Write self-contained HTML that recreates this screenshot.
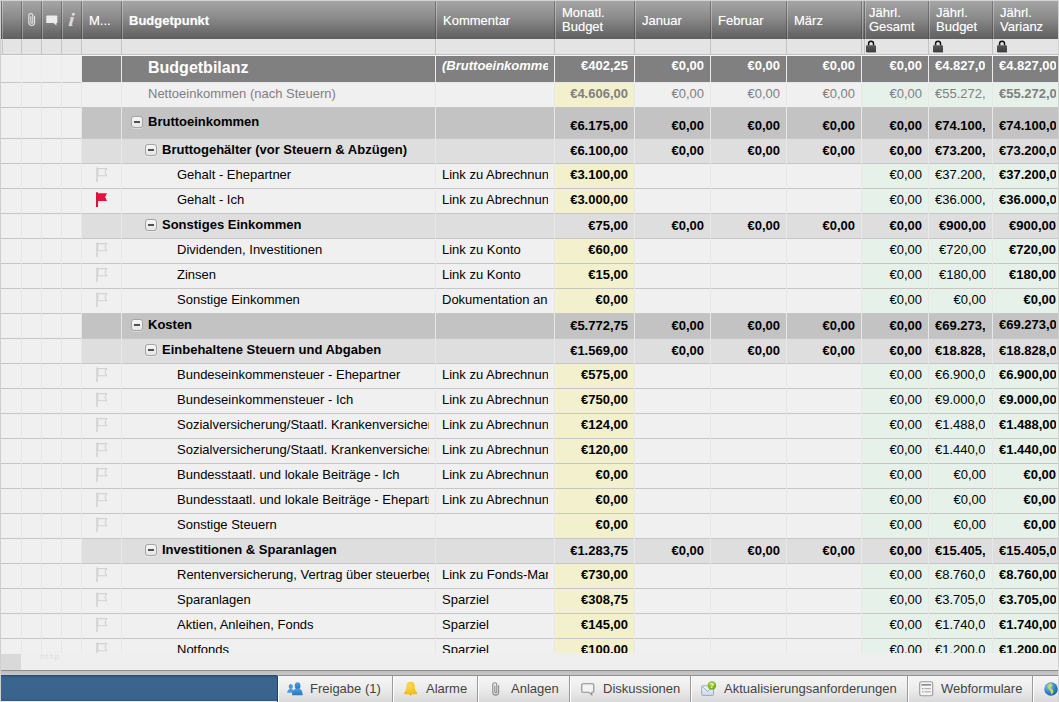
<!DOCTYPE html>
<html lang="de"><head><meta charset="utf-8"><title>Budget</title>
<style>
*{box-sizing:border-box;margin:0;padding:0}
html,body{width:1059px;height:702px;overflow:hidden;background:#efefef}
body{font-family:"Liberation Sans",Arial,Helvetica,sans-serif;font-size:13px;color:#000;position:relative}
#grid{position:absolute;left:0;top:0;width:1059px;height:653px;overflow:hidden;background:#f0f0f0}
#edgeL{position:absolute;left:0;top:0;width:1px;height:702px;background:#cfcfcf;z-index:20}
#edgeR{position:absolute;left:1058px;top:0;width:1px;height:702px;background:#d2d2d2;z-index:20}
#edgeT{position:absolute;left:0;top:0;width:1059px;height:1px;background:#d3d3d3;z-index:20}
#hdr{position:absolute;left:1px;top:1px;width:1057px;height:38px;background:linear-gradient(#a5a5a5,#8a8a8a 45%,#6a6a6a 85%,#5f5f5f);color:#fff}
.hc{position:absolute;top:0;height:38px;border-left:1px solid rgba(50,50,50,.38);box-shadow:inset 1px 0 0 rgba(255,255,255,.30);white-space:nowrap;overflow:hidden;text-shadow:0 0 1px rgba(255,255,255,.4)}
.hc .t1{position:absolute;left:7px;top:12px;line-height:15px}
.hc .t2{position:absolute;left:7px;top:5px;line-height:14px}
#flt{position:absolute;left:1px;top:39px;width:1057px;height:16px;background:#e4e4e4;border-bottom:1px solid #c2c2c2}
.fc{position:absolute;top:0;height:15px;width:1px;background:#c4c4c4}
#fltlt{position:absolute;left:1px;top:55px;width:1057px;height:1px;background:#f6f6f6}
.lock{position:absolute;top:1px}
.row{position:absolute;left:0;width:1059px;border-bottom:1px solid #c6c6c6;background:#f0f0f0}
.c{position:absolute;top:0;bottom:0}
.c>u{position:absolute;left:5px;right:6px;top:0;bottom:0;overflow:hidden;white-space:nowrap;text-decoration:none}
.c>u>i{display:inline-block;min-width:100%;text-align:right;font-style:normal;line-height:21px;position:relative}
.vs{position:absolute;top:0;bottom:-1px;width:1px;background:#e7e7e7;z-index:3}
.vd{background:#e6e6e6}
.vm{background:#e7e7e7}
.title .vs{background:#ececec}
.lab{position:absolute;top:0;bottom:0;overflow:hidden;white-space:nowrap;line-height:21px}
.cm{position:absolute;top:0;bottom:0;overflow:hidden;white-space:nowrap;line-height:21px}
.b{font-weight:bold}
.title{color:#fff}
.title .bg,.g1 .bg,.g2 .bg{position:absolute;left:82px;right:0;top:0;bottom:0}
.title .bg{background:#808080}
.g1 .bg{background:#c3c3c3}
.g2 .bg{background:#dedede}
.netto{color:#7f7f7f}
.y{background:#f2f0cd}
.gr{background:#e6f1e9}
.fl{position:absolute;left:96px;top:3px}
.mn{position:absolute;width:12px;height:12px;border:1px solid #a4a4a4;border-radius:3px;background:linear-gradient(#f6f6f6,#e6e6e6);box-shadow:0 1px 0 rgba(255,255,255,.35)}
.mn:after{content:"";position:absolute;left:2px;top:4px;width:6px;height:2px;background:#505050}
#below{position:absolute;left:0;top:653px;width:1059px;height:17px;background:#efefef}
#corner{position:absolute;left:1px;top:654px;width:20px;height:16px;background:#d9d9d9}
#wm{position:absolute;left:40px;top:652px;font-size:8px;color:#dcdcdc;font-family:"Liberation Mono",monospace;letter-spacing:0}
#ln1{position:absolute;left:0;top:670px;width:1059px;height:1px;background:#8e8e8e}
#band{position:absolute;left:0;top:671px;width:1059px;height:4px;background:linear-gradient(#bdbdbd,#c8c8c8)}
#ln2{position:absolute;left:0;top:675px;width:1059px;height:1px;background:#8f8f8f}
#bar{position:absolute;left:1px;top:675px;width:276px;height:26px;background:linear-gradient(#28496d,#38628c 10%,#3a658f 20%,#3a648e 90%,#31597f)}
#barb{position:absolute;left:0;top:701px;width:1059px;height:1px;background:#e8e8e8}
.tab{position:absolute;top:676px;height:26px;background:linear-gradient(#f6f6f6,#ececec 50%,#d9d9d9);border-left:1px solid #9a9a9a;box-shadow:inset 1px 0 0 #fff;color:#444;font-size:13px;line-height:24px;white-space:nowrap;overflow:hidden}
.tab span{position:absolute;top:1px}
.tab svg{position:absolute}
</style></head><body>

<div id="grid">
<div id="hdr">
<div class="hc" style="left:0px;width:20px"></div>
<div class="hc" style="left:20px;width:20px"><svg style="position:absolute;left:5px;top:11px" width="10" height="15" viewBox="0 0 10 15"><path d="M7.6 4.2V10.6A2.9 2.9 0 0 1 1.8 10.6V3.6A2 2 0 0 1 5.8 3.6V10.2A1 1 0 0 1 3.8 10.2V4.6" fill="none" stroke="#e2e2e2" stroke-width="1.15" stroke-linecap="round"/></svg></div>
<div class="hc" style="left:40px;width:20px"><svg style="position:absolute;left:4px;top:13px" width="13" height="13" viewBox="0 0 13 13"><path d="M1 1.4H10.6A0.7 0.7 0 0 1 11.3 2.1V8.4A0.7 0.7 0 0 1 10.6 9.1H10.4V11.4L7.6 9.1H1A0.7 0.7 0 0 1 0.3 8.4V2.1A0.7 0.7 0 0 1 1 1.4Z" fill="#ececec"/></svg></div>
<div class="hc" style="left:60px;width:20px"><span style="position:absolute;left:7px;top:7px;font-family:'Liberation Serif',serif;font-style:italic;font-weight:bold;font-size:19px;line-height:24px;color:#dcdcdc;transform:skewX(-6deg)">i</span></div>
<div class="hc" style="left:80px;width:40px"><div class="t1">M...</div></div>
<div class="hc" style="left:120px;width:314px"><div class="t1 b">Budgetpunkt</div></div>
<div class="hc" style="left:434px;width:119px"><div class="t1">Kommentar</div></div>
<div class="hc" style="left:553px;width:80px"><div class="t2">Monatl.<br>Budget</div></div>
<div class="hc" style="left:633px;width:76px"><div class="t1">Januar</div></div>
<div class="hc" style="left:709px;width:76px"><div class="t1">Februar</div></div>
<div class="hc" style="left:785px;width:75px"><div class="t1">März</div></div>
<div class="hc" style="left:860px;width:3px"></div>
<div class="hc" style="left:863px;width:64px"><div class="t2" style="left:4px">Jährl.<br>Gesamt</div></div>
<div class="hc" style="left:927px;width:64px"><div class="t2">Jährl.<br>Budget</div></div>
<div class="hc" style="left:991px;width:66px"><div class="t2">Jährl.<br>Varianz</div></div>
</div>
<div id="flt">
<div class="fc" style="left:1px"></div>
<div class="fc" style="left:20px"></div>
<div class="fc" style="left:40px"></div>
<div class="fc" style="left:60px"></div>
<div class="fc" style="left:80px"></div>
<div class="fc" style="left:120px"></div>
<div class="fc" style="left:434px"></div>
<div class="fc" style="left:553px"></div>
<div class="fc" style="left:633px"></div>
<div class="fc" style="left:709px"></div>
<div class="fc" style="left:785px"></div>
<div class="fc" style="left:860px"></div>
<div class="fc" style="left:863px"></div>
<div class="fc" style="left:927px"></div>
<div class="fc" style="left:991px"></div>
<svg class="lock" style="left:865px" width="11" height="13" viewBox="0 0 11 13"><defs><linearGradient id="lg0" x1="0" y1="0" x2="0" y2="1"><stop offset="0" stop-color="#5a5a5a"/><stop offset="1" stop-color="#3c3c3c"/></linearGradient></defs><path d="M2.6 5.6V3.6A2.45 2.45 0 0 1 7.5 3.6V5.6" fill="none" stroke="#111" stroke-width="1.5"/><rect x="0" y="5.2" width="10" height="7" rx="0.8" fill="url(#lg0)"/><rect x="0.5" y="12" width="10" height="0.8" fill="rgba(0,0,0,.18)"/></svg>
<svg class="lock" style="left:932px" width="11" height="13" viewBox="0 0 11 13"><defs><linearGradient id="lg1" x1="0" y1="0" x2="0" y2="1"><stop offset="0" stop-color="#5a5a5a"/><stop offset="1" stop-color="#3c3c3c"/></linearGradient></defs><path d="M2.6 5.6V3.6A2.45 2.45 0 0 1 7.5 3.6V5.6" fill="none" stroke="#111" stroke-width="1.5"/><rect x="0" y="5.2" width="10" height="7" rx="0.8" fill="url(#lg1)"/><rect x="0.5" y="12" width="10" height="0.8" fill="rgba(0,0,0,.18)"/></svg>
<svg class="lock" style="left:996px" width="11" height="13" viewBox="0 0 11 13"><defs><linearGradient id="lg2" x1="0" y1="0" x2="0" y2="1"><stop offset="0" stop-color="#5a5a5a"/><stop offset="1" stop-color="#3c3c3c"/></linearGradient></defs><path d="M2.6 5.6V3.6A2.45 2.45 0 0 1 7.5 3.6V5.6" fill="none" stroke="#111" stroke-width="1.5"/><rect x="0" y="5.2" width="10" height="7" rx="0.8" fill="url(#lg2)"/><rect x="0.5" y="12" width="10" height="0.8" fill="rgba(0,0,0,.18)"/></svg>
</div><div id="fltlt"></div>
<div class="row title" style="top:56px;height:27px">
<div class="bg"></div>
<div class="lab b" style="left:148px;width:281px;font-size:16px;line-height:24px;top:0px">Budgetbilanz</div>
<div class="cm b" style="left:442px;width:106px;top:-1px;font-style:italic;">(Bruttoeinkommen - Kosten)</div>
<div class="c " style="left:555px;width:79px"><u><i class="b" style="top:-1px">€402,25</i></u></div>
<div class="c " style="left:635px;width:75px"><u><i class="b" style="top:-1px">€0,00</i></u></div>
<div class="c " style="left:711px;width:75px"><u><i class="b" style="top:-1px">€0,00</i></u></div>
<div class="c " style="left:787px;width:74px"><u><i class="b" style="top:-1px">€0,00</i></u></div>
<div class="c " style="left:862px;width:66px"><u><i class="b" style="top:-1px">€0,00</i></u></div>
<div class="c " style="left:929px;width:63px"><u style="left:6px;right:7px"><i class="b" style="top:-1px">€4.827,00</i></u></div>
<div class="c " style="left:993px;width:69px"><u style="left:6px"><i class="b" style="top:-1px">€4.827,00</i></u></div>
<div class="vs vd" style="left:21px"></div>
<div class="vs vd" style="left:41px"></div>
<div class="vs vd" style="left:61px"></div>
<div class="vs" style="left:81px"></div>
<div class="vs" style="left:121px"></div>
<div class="vs" style="left:435px"></div>
<div class="vs" style="left:554px"></div>
<div class="vs" style="left:634px"></div>
<div class="vs" style="left:710px"></div>
<div class="vs" style="left:786px"></div>
<div class="vs" style="left:861px"></div>
<div class="vs" style="left:928px"></div>
<div class="vs" style="left:992px"></div>
<div style="position:absolute;left:82px;right:0;bottom:-1px;height:1px;background:#e9e9e9"></div>
</div>
<div class="row netto" style="top:83px;height:25px">
<div class="lab" style="left:148px;width:281px;top:0px">Nettoeinkommen (nach Steuern)</div>
<div class="c y" style="left:555px;width:79px"><u><i class="b" style="top:0px">€4.606,00</i></u></div>
<div class="c " style="left:635px;width:75px"><u><i class="" style="top:0px">€0,00</i></u></div>
<div class="c " style="left:711px;width:75px"><u><i class="" style="top:0px">€0,00</i></u></div>
<div class="c " style="left:787px;width:74px"><u><i class="" style="top:0px">€0,00</i></u></div>
<div class="c gr" style="left:862px;width:66px"><u><i class="" style="top:0px">€0,00</i></u></div>
<div class="c gr" style="left:929px;width:63px"><u style="left:6px;right:7px"><i class="" style="top:0px">€55.272,00</i></u></div>
<div class="c gr" style="left:993px;width:69px"><u style="left:6px"><i class="b" style="top:0px">€55.272,00</i></u></div>
<div class="vs vd" style="left:21px"></div>
<div class="vs vd" style="left:41px"></div>
<div class="vs vd" style="left:61px"></div>
<div class="vs vm" style="left:81px"></div>
<div class="vs vm" style="left:121px"></div>
<div class="vs" style="left:435px"></div>
<div class="vs" style="left:554px"></div>
<div class="vs" style="left:634px"></div>
<div class="vs" style="left:710px"></div>
<div class="vs" style="left:786px"></div>
<div class="vs" style="left:861px"></div>
<div class="vs" style="left:928px"></div>
<div class="vs" style="left:992px"></div>
</div>
<div class="row g1" style="top:108px;height:31px">
<div class="bg"></div>
<span class="mn" style="left:131px;top:8px"></span>
<div class="lab b" style="left:148px;width:281px;top:3px">Bruttoeinkommen</div>
<div class="c " style="left:555px;width:79px"><u><i class="b" style="top:7px">€6.175,00</i></u></div>
<div class="c " style="left:635px;width:75px"><u><i class="b" style="top:7px">€0,00</i></u></div>
<div class="c " style="left:711px;width:75px"><u><i class="b" style="top:7px">€0,00</i></u></div>
<div class="c " style="left:787px;width:74px"><u><i class="b" style="top:7px">€0,00</i></u></div>
<div class="c " style="left:862px;width:66px"><u><i class="b" style="top:7px">€0,00</i></u></div>
<div class="c " style="left:929px;width:63px"><u style="left:6px;right:7px"><i class="b" style="top:7px">€74.100,00</i></u></div>
<div class="c " style="left:993px;width:69px"><u style="left:6px"><i class="b" style="top:7px">€74.100,00</i></u></div>
<div class="vs vd" style="left:21px"></div>
<div class="vs vd" style="left:41px"></div>
<div class="vs vd" style="left:61px"></div>
<div class="vs" style="left:81px"></div>
<div class="vs" style="left:121px"></div>
<div class="vs" style="left:435px"></div>
<div class="vs" style="left:554px"></div>
<div class="vs" style="left:634px"></div>
<div class="vs" style="left:710px"></div>
<div class="vs" style="left:786px"></div>
<div class="vs" style="left:861px"></div>
<div class="vs" style="left:928px"></div>
<div class="vs" style="left:992px"></div>
<div style="position:absolute;left:82px;right:0;bottom:-1px;height:1px;background:#c9c9c9"></div>
</div>
<div class="row g2" style="top:139px;height:25px">
<div class="bg"></div>
<span class="mn" style="left:145px;top:5px"></span>
<div class="lab b" style="left:162px;width:267px;top:0px">Bruttogehälter (vor Steuern &amp; Abzügen)</div>
<div class="c " style="left:555px;width:79px"><u><i class="b" style="top:1px">€6.100,00</i></u></div>
<div class="c " style="left:635px;width:75px"><u><i class="b" style="top:1px">€0,00</i></u></div>
<div class="c " style="left:711px;width:75px"><u><i class="b" style="top:1px">€0,00</i></u></div>
<div class="c " style="left:787px;width:74px"><u><i class="b" style="top:1px">€0,00</i></u></div>
<div class="c " style="left:862px;width:66px"><u><i class="b" style="top:1px">€0,00</i></u></div>
<div class="c " style="left:929px;width:63px"><u style="left:6px;right:7px"><i class="b" style="top:1px">€73.200,00</i></u></div>
<div class="c " style="left:993px;width:69px"><u style="left:6px"><i class="b" style="top:1px">€73.200,00</i></u></div>
<div class="vs vd" style="left:21px"></div>
<div class="vs vd" style="left:41px"></div>
<div class="vs vd" style="left:61px"></div>
<div class="vs" style="left:81px"></div>
<div class="vs" style="left:121px"></div>
<div class="vs" style="left:435px"></div>
<div class="vs" style="left:554px"></div>
<div class="vs" style="left:634px"></div>
<div class="vs" style="left:710px"></div>
<div class="vs" style="left:786px"></div>
<div class="vs" style="left:861px"></div>
<div class="vs" style="left:928px"></div>
<div class="vs" style="left:992px"></div>
</div>
<div class="row leaf" style="top:164px;height:25px">
<svg class="fl" width="12" height="16" viewBox="0 0 12 16"><path d="M1 0.5V15" stroke="#d2d2d2" stroke-width="1.6" fill="none"/><path d="M1.8 1.6H10.6L9 5.2L10.6 8.8H1.8Z" stroke="#d2d2d2" stroke-width="1.1" fill="none"/></svg>
<div class="lab" style="left:177px;width:252px;top:0px">Gehalt - Ehepartner</div>
<div class="cm" style="left:442px;width:106px;top:0px;">Link zu Abrechnung</div>
<div class="c y" style="left:555px;width:79px"><u><i class="b" style="top:0px">€3.100,00</i></u></div>
<div class="c gr" style="left:862px;width:66px"><u><i class="" style="top:0px">€0,00</i></u></div>
<div class="c gr" style="left:929px;width:63px"><u style="left:6px;right:7px"><i class="" style="top:0px">€37.200,00</i></u></div>
<div class="c gr" style="left:993px;width:69px"><u style="left:6px"><i class="b" style="top:0px">€37.200,00</i></u></div>
<div class="vs vd" style="left:21px"></div>
<div class="vs vd" style="left:41px"></div>
<div class="vs vd" style="left:61px"></div>
<div class="vs vm" style="left:81px"></div>
<div class="vs vm" style="left:121px"></div>
<div class="vs" style="left:435px"></div>
<div class="vs" style="left:554px"></div>
<div class="vs" style="left:634px"></div>
<div class="vs" style="left:710px"></div>
<div class="vs" style="left:786px"></div>
<div class="vs" style="left:861px"></div>
<div class="vs" style="left:928px"></div>
<div class="vs" style="left:992px"></div>
</div>
<div class="row leaf" style="top:189px;height:25px">
<svg class="fl" width="12" height="16" viewBox="0 0 12 16"><path d="M1 0.2V15" stroke="#d0143c" stroke-width="2" fill="none"/><path d="M1.5 1.2H11L9.2 5.1L11 9H1.5Z" fill="#e6123c"/></svg>
<div class="lab" style="left:177px;width:252px;top:0px">Gehalt - Ich</div>
<div class="cm" style="left:442px;width:106px;top:0px;">Link zu Abrechnung</div>
<div class="c y" style="left:555px;width:79px"><u><i class="b" style="top:0px">€3.000,00</i></u></div>
<div class="c gr" style="left:862px;width:66px"><u><i class="" style="top:0px">€0,00</i></u></div>
<div class="c gr" style="left:929px;width:63px"><u style="left:6px;right:7px"><i class="" style="top:0px">€36.000,00</i></u></div>
<div class="c gr" style="left:993px;width:69px"><u style="left:6px"><i class="b" style="top:0px">€36.000,00</i></u></div>
<div class="vs vd" style="left:21px"></div>
<div class="vs vd" style="left:41px"></div>
<div class="vs vd" style="left:61px"></div>
<div class="vs vm" style="left:81px"></div>
<div class="vs vm" style="left:121px"></div>
<div class="vs" style="left:435px"></div>
<div class="vs" style="left:554px"></div>
<div class="vs" style="left:634px"></div>
<div class="vs" style="left:710px"></div>
<div class="vs" style="left:786px"></div>
<div class="vs" style="left:861px"></div>
<div class="vs" style="left:928px"></div>
<div class="vs" style="left:992px"></div>
</div>
<div class="row g2" style="top:214px;height:25px">
<div class="bg"></div>
<span class="mn" style="left:145px;top:5px"></span>
<div class="lab b" style="left:162px;width:267px;top:0px">Sonstiges Einkommen</div>
<div class="c " style="left:555px;width:79px"><u><i class="b" style="top:1px">€75,00</i></u></div>
<div class="c " style="left:635px;width:75px"><u><i class="b" style="top:1px">€0,00</i></u></div>
<div class="c " style="left:711px;width:75px"><u><i class="b" style="top:1px">€0,00</i></u></div>
<div class="c " style="left:787px;width:74px"><u><i class="b" style="top:1px">€0,00</i></u></div>
<div class="c " style="left:862px;width:66px"><u><i class="b" style="top:1px">€0,00</i></u></div>
<div class="c " style="left:929px;width:63px"><u><i class="b" style="top:1px">€900,00</i></u></div>
<div class="c " style="left:993px;width:69px"><u style="left:6px"><i class="b" style="top:1px">€900,00</i></u></div>
<div class="vs vd" style="left:21px"></div>
<div class="vs vd" style="left:41px"></div>
<div class="vs vd" style="left:61px"></div>
<div class="vs" style="left:81px"></div>
<div class="vs" style="left:121px"></div>
<div class="vs" style="left:435px"></div>
<div class="vs" style="left:554px"></div>
<div class="vs" style="left:634px"></div>
<div class="vs" style="left:710px"></div>
<div class="vs" style="left:786px"></div>
<div class="vs" style="left:861px"></div>
<div class="vs" style="left:928px"></div>
<div class="vs" style="left:992px"></div>
</div>
<div class="row leaf" style="top:239px;height:25px">
<svg class="fl" width="12" height="16" viewBox="0 0 12 16"><path d="M1 0.5V15" stroke="#d2d2d2" stroke-width="1.6" fill="none"/><path d="M1.8 1.6H10.6L9 5.2L10.6 8.8H1.8Z" stroke="#d2d2d2" stroke-width="1.1" fill="none"/></svg>
<div class="lab" style="left:177px;width:252px;top:0px">Dividenden, Investitionen</div>
<div class="cm" style="left:442px;width:106px;top:0px;">Link zu Konto</div>
<div class="c y" style="left:555px;width:79px"><u><i class="b" style="top:0px">€60,00</i></u></div>
<div class="c gr" style="left:862px;width:66px"><u><i class="" style="top:0px">€0,00</i></u></div>
<div class="c gr" style="left:929px;width:63px"><u><i class="" style="top:0px">€720,00</i></u></div>
<div class="c gr" style="left:993px;width:69px"><u style="left:6px"><i class="b" style="top:0px">€720,00</i></u></div>
<div class="vs vd" style="left:21px"></div>
<div class="vs vd" style="left:41px"></div>
<div class="vs vd" style="left:61px"></div>
<div class="vs vm" style="left:81px"></div>
<div class="vs vm" style="left:121px"></div>
<div class="vs" style="left:435px"></div>
<div class="vs" style="left:554px"></div>
<div class="vs" style="left:634px"></div>
<div class="vs" style="left:710px"></div>
<div class="vs" style="left:786px"></div>
<div class="vs" style="left:861px"></div>
<div class="vs" style="left:928px"></div>
<div class="vs" style="left:992px"></div>
</div>
<div class="row leaf" style="top:264px;height:25px">
<svg class="fl" width="12" height="16" viewBox="0 0 12 16"><path d="M1 0.5V15" stroke="#d2d2d2" stroke-width="1.6" fill="none"/><path d="M1.8 1.6H10.6L9 5.2L10.6 8.8H1.8Z" stroke="#d2d2d2" stroke-width="1.1" fill="none"/></svg>
<div class="lab" style="left:177px;width:252px;top:0px">Zinsen</div>
<div class="cm" style="left:442px;width:106px;top:0px;">Link zu Konto</div>
<div class="c y" style="left:555px;width:79px"><u><i class="b" style="top:0px">€15,00</i></u></div>
<div class="c gr" style="left:862px;width:66px"><u><i class="" style="top:0px">€0,00</i></u></div>
<div class="c gr" style="left:929px;width:63px"><u><i class="" style="top:0px">€180,00</i></u></div>
<div class="c gr" style="left:993px;width:69px"><u style="left:6px"><i class="b" style="top:0px">€180,00</i></u></div>
<div class="vs vd" style="left:21px"></div>
<div class="vs vd" style="left:41px"></div>
<div class="vs vd" style="left:61px"></div>
<div class="vs vm" style="left:81px"></div>
<div class="vs vm" style="left:121px"></div>
<div class="vs" style="left:435px"></div>
<div class="vs" style="left:554px"></div>
<div class="vs" style="left:634px"></div>
<div class="vs" style="left:710px"></div>
<div class="vs" style="left:786px"></div>
<div class="vs" style="left:861px"></div>
<div class="vs" style="left:928px"></div>
<div class="vs" style="left:992px"></div>
</div>
<div class="row leaf" style="top:289px;height:25px">
<svg class="fl" width="12" height="16" viewBox="0 0 12 16"><path d="M1 0.5V15" stroke="#d2d2d2" stroke-width="1.6" fill="none"/><path d="M1.8 1.6H10.6L9 5.2L10.6 8.8H1.8Z" stroke="#d2d2d2" stroke-width="1.1" fill="none"/></svg>
<div class="lab" style="left:177px;width:252px;top:0px">Sonstige Einkommen</div>
<div class="cm" style="left:442px;width:106px;top:0px;">Dokumentation anhängen</div>
<div class="c y" style="left:555px;width:79px"><u><i class="b" style="top:0px">€0,00</i></u></div>
<div class="c gr" style="left:862px;width:66px"><u><i class="" style="top:0px">€0,00</i></u></div>
<div class="c gr" style="left:929px;width:63px"><u><i class="" style="top:0px">€0,00</i></u></div>
<div class="c gr" style="left:993px;width:69px"><u style="left:6px"><i class="b" style="top:0px">€0,00</i></u></div>
<div class="vs vd" style="left:21px"></div>
<div class="vs vd" style="left:41px"></div>
<div class="vs vd" style="left:61px"></div>
<div class="vs vm" style="left:81px"></div>
<div class="vs vm" style="left:121px"></div>
<div class="vs" style="left:435px"></div>
<div class="vs" style="left:554px"></div>
<div class="vs" style="left:634px"></div>
<div class="vs" style="left:710px"></div>
<div class="vs" style="left:786px"></div>
<div class="vs" style="left:861px"></div>
<div class="vs" style="left:928px"></div>
<div class="vs" style="left:992px"></div>
</div>
<div class="row g1" style="top:314px;height:25px">
<div class="bg"></div>
<span class="mn" style="left:131px;top:5px"></span>
<div class="lab b" style="left:148px;width:281px;top:0px">Kosten</div>
<div class="c " style="left:555px;width:79px"><u><i class="b" style="top:1px">€5.772,75</i></u></div>
<div class="c " style="left:635px;width:75px"><u><i class="b" style="top:1px">€0,00</i></u></div>
<div class="c " style="left:711px;width:75px"><u><i class="b" style="top:1px">€0,00</i></u></div>
<div class="c " style="left:787px;width:74px"><u><i class="b" style="top:1px">€0,00</i></u></div>
<div class="c " style="left:862px;width:66px"><u><i class="b" style="top:1px">€0,00</i></u></div>
<div class="c " style="left:929px;width:63px"><u style="left:6px;right:7px"><i class="b" style="top:1px">€69.273,00</i></u></div>
<div class="c " style="left:993px;width:69px"><u style="left:6px"><i class="b" style="top:0px">€69.273,00</i></u></div>
<div class="vs vd" style="left:21px"></div>
<div class="vs vd" style="left:41px"></div>
<div class="vs vd" style="left:61px"></div>
<div class="vs" style="left:81px"></div>
<div class="vs" style="left:121px"></div>
<div class="vs" style="left:435px"></div>
<div class="vs" style="left:554px"></div>
<div class="vs" style="left:634px"></div>
<div class="vs" style="left:710px"></div>
<div class="vs" style="left:786px"></div>
<div class="vs" style="left:861px"></div>
<div class="vs" style="left:928px"></div>
<div class="vs" style="left:992px"></div>
<div style="position:absolute;left:82px;right:0;bottom:-1px;height:1px;background:#c9c9c9"></div>
</div>
<div class="row g2" style="top:339px;height:25px">
<div class="bg"></div>
<span class="mn" style="left:145px;top:5px"></span>
<div class="lab b" style="left:162px;width:267px;top:0px">Einbehaltene Steuern und Abgaben</div>
<div class="c " style="left:555px;width:79px"><u><i class="b" style="top:1px">€1.569,00</i></u></div>
<div class="c " style="left:635px;width:75px"><u><i class="b" style="top:1px">€0,00</i></u></div>
<div class="c " style="left:711px;width:75px"><u><i class="b" style="top:1px">€0,00</i></u></div>
<div class="c " style="left:787px;width:74px"><u><i class="b" style="top:1px">€0,00</i></u></div>
<div class="c " style="left:862px;width:66px"><u><i class="b" style="top:1px">€0,00</i></u></div>
<div class="c " style="left:929px;width:63px"><u style="left:6px;right:7px"><i class="b" style="top:1px">€18.828,00</i></u></div>
<div class="c " style="left:993px;width:69px"><u style="left:6px"><i class="b" style="top:1px">€18.828,00</i></u></div>
<div class="vs vd" style="left:21px"></div>
<div class="vs vd" style="left:41px"></div>
<div class="vs vd" style="left:61px"></div>
<div class="vs" style="left:81px"></div>
<div class="vs" style="left:121px"></div>
<div class="vs" style="left:435px"></div>
<div class="vs" style="left:554px"></div>
<div class="vs" style="left:634px"></div>
<div class="vs" style="left:710px"></div>
<div class="vs" style="left:786px"></div>
<div class="vs" style="left:861px"></div>
<div class="vs" style="left:928px"></div>
<div class="vs" style="left:992px"></div>
</div>
<div class="row leaf" style="top:364px;height:25px">
<svg class="fl" width="12" height="16" viewBox="0 0 12 16"><path d="M1 0.5V15" stroke="#d2d2d2" stroke-width="1.6" fill="none"/><path d="M1.8 1.6H10.6L9 5.2L10.6 8.8H1.8Z" stroke="#d2d2d2" stroke-width="1.1" fill="none"/></svg>
<div class="lab" style="left:177px;width:252px;top:0px">Bundeseinkommensteuer - Ehepartner</div>
<div class="cm" style="left:442px;width:106px;top:0px;">Link zu Abrechnung</div>
<div class="c y" style="left:555px;width:79px"><u><i class="b" style="top:0px">€575,00</i></u></div>
<div class="c gr" style="left:862px;width:66px"><u><i class="" style="top:0px">€0,00</i></u></div>
<div class="c gr" style="left:929px;width:63px"><u style="left:6px;right:7px"><i class="" style="top:0px">€6.900,00</i></u></div>
<div class="c gr" style="left:993px;width:69px"><u style="left:6px"><i class="b" style="top:0px">€6.900,00</i></u></div>
<div class="vs vd" style="left:21px"></div>
<div class="vs vd" style="left:41px"></div>
<div class="vs vd" style="left:61px"></div>
<div class="vs vm" style="left:81px"></div>
<div class="vs vm" style="left:121px"></div>
<div class="vs" style="left:435px"></div>
<div class="vs" style="left:554px"></div>
<div class="vs" style="left:634px"></div>
<div class="vs" style="left:710px"></div>
<div class="vs" style="left:786px"></div>
<div class="vs" style="left:861px"></div>
<div class="vs" style="left:928px"></div>
<div class="vs" style="left:992px"></div>
</div>
<div class="row leaf" style="top:389px;height:25px">
<svg class="fl" width="12" height="16" viewBox="0 0 12 16"><path d="M1 0.5V15" stroke="#d2d2d2" stroke-width="1.6" fill="none"/><path d="M1.8 1.6H10.6L9 5.2L10.6 8.8H1.8Z" stroke="#d2d2d2" stroke-width="1.1" fill="none"/></svg>
<div class="lab" style="left:177px;width:252px;top:0px">Bundeseinkommensteuer - Ich</div>
<div class="cm" style="left:442px;width:106px;top:0px;">Link zu Abrechnung</div>
<div class="c y" style="left:555px;width:79px"><u><i class="b" style="top:0px">€750,00</i></u></div>
<div class="c gr" style="left:862px;width:66px"><u><i class="" style="top:0px">€0,00</i></u></div>
<div class="c gr" style="left:929px;width:63px"><u style="left:6px;right:7px"><i class="" style="top:0px">€9.000,00</i></u></div>
<div class="c gr" style="left:993px;width:69px"><u style="left:6px"><i class="b" style="top:0px">€9.000,00</i></u></div>
<div class="vs vd" style="left:21px"></div>
<div class="vs vd" style="left:41px"></div>
<div class="vs vd" style="left:61px"></div>
<div class="vs vm" style="left:81px"></div>
<div class="vs vm" style="left:121px"></div>
<div class="vs" style="left:435px"></div>
<div class="vs" style="left:554px"></div>
<div class="vs" style="left:634px"></div>
<div class="vs" style="left:710px"></div>
<div class="vs" style="left:786px"></div>
<div class="vs" style="left:861px"></div>
<div class="vs" style="left:928px"></div>
<div class="vs" style="left:992px"></div>
</div>
<div class="row leaf" style="top:414px;height:25px">
<svg class="fl" width="12" height="16" viewBox="0 0 12 16"><path d="M1 0.5V15" stroke="#d2d2d2" stroke-width="1.6" fill="none"/><path d="M1.8 1.6H10.6L9 5.2L10.6 8.8H1.8Z" stroke="#d2d2d2" stroke-width="1.1" fill="none"/></svg>
<div class="lab" style="left:177px;width:252px;top:0px">Sozialversicherung/Staatl. Krankenversicherung - Ehepartner</div>
<div class="cm" style="left:442px;width:106px;top:0px;">Link zu Abrechnung</div>
<div class="c y" style="left:555px;width:79px"><u><i class="b" style="top:0px">€124,00</i></u></div>
<div class="c gr" style="left:862px;width:66px"><u><i class="" style="top:0px">€0,00</i></u></div>
<div class="c gr" style="left:929px;width:63px"><u style="left:6px;right:7px"><i class="" style="top:0px">€1.488,00</i></u></div>
<div class="c gr" style="left:993px;width:69px"><u style="left:6px"><i class="b" style="top:0px">€1.488,00</i></u></div>
<div class="vs vd" style="left:21px"></div>
<div class="vs vd" style="left:41px"></div>
<div class="vs vd" style="left:61px"></div>
<div class="vs vm" style="left:81px"></div>
<div class="vs vm" style="left:121px"></div>
<div class="vs" style="left:435px"></div>
<div class="vs" style="left:554px"></div>
<div class="vs" style="left:634px"></div>
<div class="vs" style="left:710px"></div>
<div class="vs" style="left:786px"></div>
<div class="vs" style="left:861px"></div>
<div class="vs" style="left:928px"></div>
<div class="vs" style="left:992px"></div>
</div>
<div class="row leaf" style="top:439px;height:25px">
<svg class="fl" width="12" height="16" viewBox="0 0 12 16"><path d="M1 0.5V15" stroke="#d2d2d2" stroke-width="1.6" fill="none"/><path d="M1.8 1.6H10.6L9 5.2L10.6 8.8H1.8Z" stroke="#d2d2d2" stroke-width="1.1" fill="none"/></svg>
<div class="lab" style="left:177px;width:252px;top:0px">Sozialversicherung/Staatl. Krankenversicherung - Ich</div>
<div class="cm" style="left:442px;width:106px;top:0px;">Link zu Abrechnung</div>
<div class="c y" style="left:555px;width:79px"><u><i class="b" style="top:0px">€120,00</i></u></div>
<div class="c gr" style="left:862px;width:66px"><u><i class="" style="top:0px">€0,00</i></u></div>
<div class="c gr" style="left:929px;width:63px"><u style="left:6px;right:7px"><i class="" style="top:0px">€1.440,00</i></u></div>
<div class="c gr" style="left:993px;width:69px"><u style="left:6px"><i class="b" style="top:0px">€1.440,00</i></u></div>
<div class="vs vd" style="left:21px"></div>
<div class="vs vd" style="left:41px"></div>
<div class="vs vd" style="left:61px"></div>
<div class="vs vm" style="left:81px"></div>
<div class="vs vm" style="left:121px"></div>
<div class="vs" style="left:435px"></div>
<div class="vs" style="left:554px"></div>
<div class="vs" style="left:634px"></div>
<div class="vs" style="left:710px"></div>
<div class="vs" style="left:786px"></div>
<div class="vs" style="left:861px"></div>
<div class="vs" style="left:928px"></div>
<div class="vs" style="left:992px"></div>
</div>
<div class="row leaf" style="top:464px;height:25px">
<svg class="fl" width="12" height="16" viewBox="0 0 12 16"><path d="M1 0.5V15" stroke="#d2d2d2" stroke-width="1.6" fill="none"/><path d="M1.8 1.6H10.6L9 5.2L10.6 8.8H1.8Z" stroke="#d2d2d2" stroke-width="1.1" fill="none"/></svg>
<div class="lab" style="left:177px;width:252px;top:0px">Bundesstaatl. und lokale Beiträge - Ich</div>
<div class="cm" style="left:442px;width:106px;top:0px;">Link zu Abrechnung</div>
<div class="c y" style="left:555px;width:79px"><u><i class="b" style="top:0px">€0,00</i></u></div>
<div class="c gr" style="left:862px;width:66px"><u><i class="" style="top:0px">€0,00</i></u></div>
<div class="c gr" style="left:929px;width:63px"><u><i class="" style="top:0px">€0,00</i></u></div>
<div class="c gr" style="left:993px;width:69px"><u style="left:6px"><i class="b" style="top:0px">€0,00</i></u></div>
<div class="vs vd" style="left:21px"></div>
<div class="vs vd" style="left:41px"></div>
<div class="vs vd" style="left:61px"></div>
<div class="vs vm" style="left:81px"></div>
<div class="vs vm" style="left:121px"></div>
<div class="vs" style="left:435px"></div>
<div class="vs" style="left:554px"></div>
<div class="vs" style="left:634px"></div>
<div class="vs" style="left:710px"></div>
<div class="vs" style="left:786px"></div>
<div class="vs" style="left:861px"></div>
<div class="vs" style="left:928px"></div>
<div class="vs" style="left:992px"></div>
</div>
<div class="row leaf" style="top:489px;height:25px">
<svg class="fl" width="12" height="16" viewBox="0 0 12 16"><path d="M1 0.5V15" stroke="#d2d2d2" stroke-width="1.6" fill="none"/><path d="M1.8 1.6H10.6L9 5.2L10.6 8.8H1.8Z" stroke="#d2d2d2" stroke-width="1.1" fill="none"/></svg>
<div class="lab" style="left:177px;width:252px;top:0px">Bundesstaatl. und lokale Beiträge - Ehepartner</div>
<div class="cm" style="left:442px;width:106px;top:0px;">Link zu Abrechnung</div>
<div class="c y" style="left:555px;width:79px"><u><i class="b" style="top:0px">€0,00</i></u></div>
<div class="c gr" style="left:862px;width:66px"><u><i class="" style="top:0px">€0,00</i></u></div>
<div class="c gr" style="left:929px;width:63px"><u><i class="" style="top:0px">€0,00</i></u></div>
<div class="c gr" style="left:993px;width:69px"><u style="left:6px"><i class="b" style="top:0px">€0,00</i></u></div>
<div class="vs vd" style="left:21px"></div>
<div class="vs vd" style="left:41px"></div>
<div class="vs vd" style="left:61px"></div>
<div class="vs vm" style="left:81px"></div>
<div class="vs vm" style="left:121px"></div>
<div class="vs" style="left:435px"></div>
<div class="vs" style="left:554px"></div>
<div class="vs" style="left:634px"></div>
<div class="vs" style="left:710px"></div>
<div class="vs" style="left:786px"></div>
<div class="vs" style="left:861px"></div>
<div class="vs" style="left:928px"></div>
<div class="vs" style="left:992px"></div>
</div>
<div class="row leaf" style="top:514px;height:25px">
<svg class="fl" width="12" height="16" viewBox="0 0 12 16"><path d="M1 0.5V15" stroke="#d2d2d2" stroke-width="1.6" fill="none"/><path d="M1.8 1.6H10.6L9 5.2L10.6 8.8H1.8Z" stroke="#d2d2d2" stroke-width="1.1" fill="none"/></svg>
<div class="lab" style="left:177px;width:252px;top:0px">Sonstige Steuern</div>
<div class="c y" style="left:555px;width:79px"><u><i class="b" style="top:0px">€0,00</i></u></div>
<div class="c gr" style="left:862px;width:66px"><u><i class="" style="top:0px">€0,00</i></u></div>
<div class="c gr" style="left:929px;width:63px"><u><i class="" style="top:0px">€0,00</i></u></div>
<div class="c gr" style="left:993px;width:69px"><u style="left:6px"><i class="b" style="top:0px">€0,00</i></u></div>
<div class="vs vd" style="left:21px"></div>
<div class="vs vd" style="left:41px"></div>
<div class="vs vd" style="left:61px"></div>
<div class="vs vm" style="left:81px"></div>
<div class="vs vm" style="left:121px"></div>
<div class="vs" style="left:435px"></div>
<div class="vs" style="left:554px"></div>
<div class="vs" style="left:634px"></div>
<div class="vs" style="left:710px"></div>
<div class="vs" style="left:786px"></div>
<div class="vs" style="left:861px"></div>
<div class="vs" style="left:928px"></div>
<div class="vs" style="left:992px"></div>
</div>
<div class="row g2" style="top:539px;height:25px">
<div class="bg"></div>
<span class="mn" style="left:145px;top:5px"></span>
<div class="lab b" style="left:162px;width:267px;top:0px">Investitionen &amp; Sparanlagen</div>
<div class="c " style="left:555px;width:79px"><u><i class="b" style="top:1px">€1.283,75</i></u></div>
<div class="c " style="left:635px;width:75px"><u><i class="b" style="top:1px">€0,00</i></u></div>
<div class="c " style="left:711px;width:75px"><u><i class="b" style="top:1px">€0,00</i></u></div>
<div class="c " style="left:787px;width:74px"><u><i class="b" style="top:1px">€0,00</i></u></div>
<div class="c " style="left:862px;width:66px"><u><i class="b" style="top:1px">€0,00</i></u></div>
<div class="c " style="left:929px;width:63px"><u style="left:6px;right:7px"><i class="b" style="top:1px">€15.405,00</i></u></div>
<div class="c " style="left:993px;width:69px"><u style="left:6px"><i class="b" style="top:1px">€15.405,00</i></u></div>
<div class="vs vd" style="left:21px"></div>
<div class="vs vd" style="left:41px"></div>
<div class="vs vd" style="left:61px"></div>
<div class="vs" style="left:81px"></div>
<div class="vs" style="left:121px"></div>
<div class="vs" style="left:435px"></div>
<div class="vs" style="left:554px"></div>
<div class="vs" style="left:634px"></div>
<div class="vs" style="left:710px"></div>
<div class="vs" style="left:786px"></div>
<div class="vs" style="left:861px"></div>
<div class="vs" style="left:928px"></div>
<div class="vs" style="left:992px"></div>
</div>
<div class="row leaf" style="top:564px;height:25px">
<svg class="fl" width="12" height="16" viewBox="0 0 12 16"><path d="M1 0.5V15" stroke="#d2d2d2" stroke-width="1.6" fill="none"/><path d="M1.8 1.6H10.6L9 5.2L10.6 8.8H1.8Z" stroke="#d2d2d2" stroke-width="1.1" fill="none"/></svg>
<div class="lab" style="left:177px;width:252px;top:0px">Rentenversicherung, Vertrag über steuerbegünstigte Altersvorsorge</div>
<div class="cm" style="left:442px;width:106px;top:0px;">Link zu Fonds-Manager</div>
<div class="c y" style="left:555px;width:79px"><u><i class="b" style="top:0px">€730,00</i></u></div>
<div class="c gr" style="left:862px;width:66px"><u><i class="" style="top:0px">€0,00</i></u></div>
<div class="c gr" style="left:929px;width:63px"><u style="left:6px;right:7px"><i class="" style="top:0px">€8.760,00</i></u></div>
<div class="c gr" style="left:993px;width:69px"><u style="left:6px"><i class="b" style="top:0px">€8.760,00</i></u></div>
<div class="vs vd" style="left:21px"></div>
<div class="vs vd" style="left:41px"></div>
<div class="vs vd" style="left:61px"></div>
<div class="vs vm" style="left:81px"></div>
<div class="vs vm" style="left:121px"></div>
<div class="vs" style="left:435px"></div>
<div class="vs" style="left:554px"></div>
<div class="vs" style="left:634px"></div>
<div class="vs" style="left:710px"></div>
<div class="vs" style="left:786px"></div>
<div class="vs" style="left:861px"></div>
<div class="vs" style="left:928px"></div>
<div class="vs" style="left:992px"></div>
</div>
<div class="row leaf" style="top:589px;height:25px">
<svg class="fl" width="12" height="16" viewBox="0 0 12 16"><path d="M1 0.5V15" stroke="#d2d2d2" stroke-width="1.6" fill="none"/><path d="M1.8 1.6H10.6L9 5.2L10.6 8.8H1.8Z" stroke="#d2d2d2" stroke-width="1.1" fill="none"/></svg>
<div class="lab" style="left:177px;width:252px;top:0px">Sparanlagen</div>
<div class="cm" style="left:442px;width:106px;top:0px;">Sparziel</div>
<div class="c y" style="left:555px;width:79px"><u><i class="b" style="top:0px">€308,75</i></u></div>
<div class="c gr" style="left:862px;width:66px"><u><i class="" style="top:0px">€0,00</i></u></div>
<div class="c gr" style="left:929px;width:63px"><u style="left:6px;right:7px"><i class="" style="top:0px">€3.705,00</i></u></div>
<div class="c gr" style="left:993px;width:69px"><u style="left:6px"><i class="b" style="top:0px">€3.705,00</i></u></div>
<div class="vs vd" style="left:21px"></div>
<div class="vs vd" style="left:41px"></div>
<div class="vs vd" style="left:61px"></div>
<div class="vs vm" style="left:81px"></div>
<div class="vs vm" style="left:121px"></div>
<div class="vs" style="left:435px"></div>
<div class="vs" style="left:554px"></div>
<div class="vs" style="left:634px"></div>
<div class="vs" style="left:710px"></div>
<div class="vs" style="left:786px"></div>
<div class="vs" style="left:861px"></div>
<div class="vs" style="left:928px"></div>
<div class="vs" style="left:992px"></div>
</div>
<div class="row leaf" style="top:614px;height:25px">
<svg class="fl" width="12" height="16" viewBox="0 0 12 16"><path d="M1 0.5V15" stroke="#d2d2d2" stroke-width="1.6" fill="none"/><path d="M1.8 1.6H10.6L9 5.2L10.6 8.8H1.8Z" stroke="#d2d2d2" stroke-width="1.1" fill="none"/></svg>
<div class="lab" style="left:177px;width:252px;top:0px">Aktien, Anleihen, Fonds</div>
<div class="cm" style="left:442px;width:106px;top:0px;">Sparziel</div>
<div class="c y" style="left:555px;width:79px"><u><i class="b" style="top:0px">€145,00</i></u></div>
<div class="c gr" style="left:862px;width:66px"><u><i class="" style="top:0px">€0,00</i></u></div>
<div class="c gr" style="left:929px;width:63px"><u style="left:6px;right:7px"><i class="" style="top:0px">€1.740,00</i></u></div>
<div class="c gr" style="left:993px;width:69px"><u style="left:6px"><i class="b" style="top:0px">€1.740,00</i></u></div>
<div class="vs vd" style="left:21px"></div>
<div class="vs vd" style="left:41px"></div>
<div class="vs vd" style="left:61px"></div>
<div class="vs vm" style="left:81px"></div>
<div class="vs vm" style="left:121px"></div>
<div class="vs" style="left:435px"></div>
<div class="vs" style="left:554px"></div>
<div class="vs" style="left:634px"></div>
<div class="vs" style="left:710px"></div>
<div class="vs" style="left:786px"></div>
<div class="vs" style="left:861px"></div>
<div class="vs" style="left:928px"></div>
<div class="vs" style="left:992px"></div>
</div>
<div class="row leaf" style="top:639px;height:25px">
<svg class="fl" width="12" height="16" viewBox="0 0 12 16"><path d="M1 0.5V15" stroke="#d2d2d2" stroke-width="1.6" fill="none"/><path d="M1.8 1.6H10.6L9 5.2L10.6 8.8H1.8Z" stroke="#d2d2d2" stroke-width="1.1" fill="none"/></svg>
<div class="lab" style="left:177px;width:252px;top:0px">Notfonds</div>
<div class="cm" style="left:442px;width:106px;top:0px;">Sparziel</div>
<div class="c y" style="left:555px;width:79px"><u><i class="b" style="top:0px">€100,00</i></u></div>
<div class="c gr" style="left:862px;width:66px"><u><i class="" style="top:0px">€0,00</i></u></div>
<div class="c gr" style="left:929px;width:63px"><u style="left:6px;right:7px"><i class="" style="top:0px">€1.200,00</i></u></div>
<div class="c gr" style="left:993px;width:69px"><u style="left:6px"><i class="b" style="top:0px">€1.200,00</i></u></div>
<div class="vs vd" style="left:21px"></div>
<div class="vs vd" style="left:41px"></div>
<div class="vs vd" style="left:61px"></div>
<div class="vs vm" style="left:81px"></div>
<div class="vs vm" style="left:121px"></div>
<div class="vs" style="left:435px"></div>
<div class="vs" style="left:554px"></div>
<div class="vs" style="left:634px"></div>
<div class="vs" style="left:710px"></div>
<div class="vs" style="left:786px"></div>
<div class="vs" style="left:861px"></div>
<div class="vs" style="left:928px"></div>
<div class="vs" style="left:992px"></div>
</div>
</div>
<div id="below"></div><div id="corner"></div><div id="wm">http</div>
<div id="ln1"></div><div id="band"></div><div id="ln2"></div><div id="bar"></div><div id="barb"></div>
<div class="tab" style="left:277px;width:115px;border-left-color:#23426a"><svg style="left:9px;top:6px" width="17" height="14" viewBox="0 0 17 14"><defs><linearGradient id="pg" x1="0" y1="0" x2="0" y2="1"><stop offset="0" stop-color="#4f9bdc"/><stop offset="1" stop-color="#2478c4"/></linearGradient></defs><ellipse cx="3.8" cy="4.4" rx="2.1" ry="2.5" fill="#4a97da"/><path d="M0.2 10.8C0.2 8.2 1.6 6.9 3.8 6.9S7.2 8 7.2 10.8Z" fill="#4a97da"/><ellipse cx="10.6" cy="3.7" rx="2.9" ry="3.5" fill="url(#pg)"/><path d="M5 13.3C5 9.4 6.8 6.6 10.6 6.6S15.6 9.4 15.6 13.3Z" fill="url(#pg)"/></svg><span style="left:32px">Freigabe (1)</span></div>
<div class="tab" style="left:392px;width:85px"><svg style="left:10px;top:5px" width="15" height="16" viewBox="0 0 15 16"><defs><radialGradient id="bg" cx="0.4" cy="0.3" r="0.8"><stop offset="0" stop-color="#f9dc4c"/><stop offset="1" stop-color="#efb818"/></radialGradient></defs><circle cx="7.6" cy="13.1" r="1.3" fill="#dca514"/><path d="M7.6 0.8C4.6 0.8 3.4 2.8 3.4 5.2C3.4 8.6 2.8 10 1.2 11.4V13.2H14V11.4C12.4 10 11.8 8.6 11.8 5.2C11.8 2.8 10.6 0.8 7.6 0.8Z" fill="url(#bg)"/></svg><span style="left:33px">Alarme</span></div>
<div class="tab" style="left:477px;width:92px"><svg style="left:13px;top:5px" width="10" height="16" viewBox="0 0 10 16"><path d="M7.6 4.6V11.2A2.9 2.9 0 0 1 1.8 11.2V3.8A2 2 0 0 1 5.8 3.8V10.8A1 1 0 0 1 3.8 10.8V5" fill="none" stroke="#8a8a8a" stroke-width="1.1" stroke-linecap="round"/></svg><span style="left:33px">Anlagen</span></div>
<div class="tab" style="left:569px;width:121px"><svg style="left:11px;top:7px" width="15" height="13" viewBox="0 0 15 13"><path d="M2 0.8H11.6A1.2 1.2 0 0 1 12.8 2V8A1.2 1.2 0 0 1 11.6 9.2H10.8V11.8L7.8 9.2H2A1.2 1.2 0 0 1 0.8 8V2A1.2 1.2 0 0 1 2 0.8Z" fill="#f3f3f3" stroke="#8c8c8c" stroke-width="1.1"/></svg><span style="left:33px">Diskussionen</span></div>
<div class="tab" style="left:690px;width:217px"><svg style="left:10px;top:3px" width="18" height="18" viewBox="0 0 18 18"><defs><linearGradient id="mg" x1="0" y1="0" x2="0" y2="1"><stop offset="0" stop-color="#f2f6fb"/><stop offset="1" stop-color="#c4dcf0"/></linearGradient><radialGradient id="qg" cx="0.4" cy="0.3" r="0.8"><stop offset="0" stop-color="#a2d23a"/><stop offset="1" stop-color="#6aa514"/></radialGradient></defs><rect x="0.7" y="6.8" width="11.8" height="9.6" rx="0.8" fill="url(#mg)" stroke="#9aa2aa" stroke-width="0.9"/><path d="M1.2 7.4L6.6 12.6L12 7.4" fill="none" stroke="#9aa2aa" stroke-width="0.9"/><circle cx="10.9" cy="6.5" r="4.3" fill="url(#qg)"/><text x="10.9" y="9.2" font-family="Liberation Sans,sans-serif" font-size="7.5" font-weight="bold" fill="#fff" text-anchor="middle">?</text></svg><span style="left:33px">Aktualisierungsanforderungen</span></div>
<div class="tab" style="left:907px;width:125px"><svg style="left:11px;top:5px" width="15" height="16" viewBox="0 0 15 16"><rect x="0.7" y="0.7" width="13" height="14" rx="1.8" fill="#f4f4f4" stroke="#9a9a9a" stroke-width="1.1"/><rect x="2.4" y="3" width="9.6" height="1.6" fill="#8a8a8a"/><rect x="3" y="7" width="1.4" height="1.2" fill="#9a9a9a"/><rect x="5.4" y="7" width="6.4" height="1.2" fill="#b0b0b0"/><rect x="3" y="10.2" width="1.4" height="1.2" fill="#9a9a9a"/><rect x="5.4" y="10.2" width="6.4" height="1.2" fill="#b0b0b0"/></svg><span style="left:33px">Webformulare</span></div>
<div class="tab" style="left:1032px;width:27px"><svg style="left:11px;top:6px" width="14" height="14" viewBox="0 0 17 17"><defs><radialGradient id="gg" cx="0.35" cy="0.3" r="0.8"><stop offset="0" stop-color="#8cc8f2"/><stop offset="0.6" stop-color="#2f80c6"/><stop offset="1" stop-color="#1a5a9e"/></radialGradient></defs><circle cx="8.5" cy="8.5" r="8.2" fill="url(#gg)"/><path d="M6.2 2C8.2 1.4 10.6 2 10.2 3.8C9.8 5.4 7.6 5.6 8.2 7.4C8.8 9 11.2 8.8 11.4 10.8C11.6 12.6 10.2 14.4 9 15.2C8.2 13.6 8.6 12 7.6 10.6C6.4 9 5 8 5 6C5 4.4 5.4 3 6.2 2Z" fill="#c8da4e"/></svg><span style="left:-1033px"></span></div>
<div id="edgeT"></div><div id="edgeL"></div><div id="edgeR"></div>
</body></html>
